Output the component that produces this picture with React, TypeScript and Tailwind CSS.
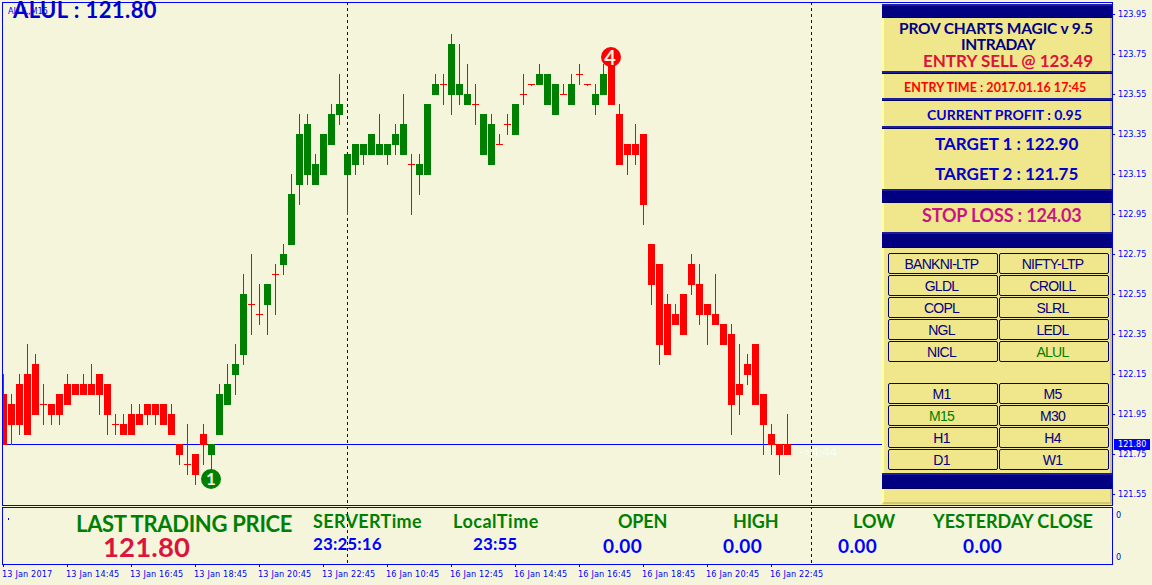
import clsx from "clsx";

// One row per bar: [high, body top, body bottom, low], in grid steps of 10px
const CANDLES: [number, number, number, number][] = [
    [37, 39, 44, 44], [39, 40, 42, 44], [37, 38, 42, 43], [34, 37, 43, 43], [35, 36, 41, 41],
    [38, 40, 40, 42], [40, 40, 41, 42], [39, 39, 41, 42], [37, 38, 40, 40], [38, 38, 39, 39],
    [37, 38, 39, 39], [36, 38, 39, 39], [37, 37, 39, 41], [38, 38, 41, 43], [41, 42, 42, 43],
    [41, 42, 43, 43], [40, 41, 43, 43], [40, 41, 42, 42], [40, 40, 41, 42], [40, 40, 41, 42],
    [40, 40, 42, 42], [40, 41, 43, 43], [44, 44, 45, 46], [42, 46, 46, 47], [45, 45, 47, 48],
    [42, 43, 44, 46], [44, 44, 45, 47], [38, 39, 43, 43], [36, 38, 40, 40], [34, 36, 37, 39],
    [27, 29, 35, 36], [25, 30, 30, 33], [28, 31, 31, 32], [28, 28, 30, 33], [26, 27, 27, 31],
    [24, 25, 26, 27], [17, 19, 24, 24], [11, 13, 18, 20], [11, 12, 17, 18], [15, 16, 18, 18],
    [13, 13, 17, 17], [10, 11, 14, 14], [7, 10, 11, 12], [15, 15, 17, 21], [14, 14, 16, 17],
    [14, 14, 15, 16], [13, 13, 15, 15], [11, 14, 15, 15], [14, 14, 15, 16], [12, 13, 14, 15],
    [9, 12, 15, 15], [15, 16, 16, 21], [15, 16, 17, 19], [10, 10, 17, 17], [7, 8, 9, 9],
    [7, 8, 8, 10], [3, 4, 9, 11], [4, 8, 9, 10], [6, 9, 10, 10], [8, 10, 10, 12],
    [11, 11, 15, 15], [11, 12, 16, 16], [13, 14, 14, 14], [11, 12, 12, 13], [10, 10, 13, 13],
    [7, 9, 9, 10], [8, 8, 8, 8], [6, 7, 8, 8], [7, 7, 10, 10], [8, 8, 11, 11],
    [8, 9, 9, 9], [7, 8, 10, 10], [6, 7, 7, 8], [8, 8, 8, 8], [8, 9, 10, 11],
    [6, 7, 9, 9], [6, 6, 10, 10], [10, 11, 16, 16], [14, 14, 15, 17], [12, 14, 15, 16],
    [13, 13, 20, 22], [24, 24, 28, 30], [26, 26, 34, 36], [29, 30, 35, 35], [30, 31, 32, 32],
    [29, 29, 33, 33], [25, 26, 28, 29], [26, 28, 31, 32], [30, 30, 31, 34], [27, 31, 32, 32],
    [32, 32, 34, 34], [32, 33, 40, 43], [34, 38, 39, 41], [35, 36, 37, 38], [34, 34, 40, 40],
    [39, 39, 42, 45], [42, 43, 44, 45], [44, 44, 45, 47], [41, 44, 45, 45],
];

const FIRST_BUY = 26;
const FIRST_SELL = 76;

const PRICES = [
    "123.95", "123.75", "123.55", "123.35", "123.15", "122.95", "122.75",
    "122.55", "122.35", "122.15", "121.95", "121.75", "121.55",
];

const DATES = [
    "13 Jan 2017", "13 Jan 14:45", "13 Jan 16:45", "13 Jan 18:45", "13 Jan 20:45", "13 Jan 22:45", "16 Jan 10:45",
    "16 Jan 12:45", "16 Jan 14:45", "16 Jan 16:45", "16 Jan 18:45", "16 Jan 20:45", "16 Jan 22:45",
];

const SYMBOLS = ["BANKNI-LTP", "NIFTY-LTP", "GLDL", "CROILL", "COPL", "SLRL", "NGL", "LEDL", "NICL", "ALUL"];
const PERIODS = ["M1", "M5", "M15", "M30", "H1", "H4", "D1", "W1"];

function Candle({ index }: { index: number }) {
    const [high, top, bottom, low] = CANDLES[index];
    const x = 3 + index * 8;
    const color = index >= FIRST_BUY && index < FIRST_SELL ? "#008000" : "#ff0000";
    const doji = top === bottom;
    const flat = high === low;
    return (
        <g>
            <rect x={x} y={high * 10 + 4} width={1} height={flat ? 2 : (low - high) * 10 + 1} fill={flat ? "#ff0000" : color} />
            <rect x={x - 3} y={top * 10 + 4} width={7} height={(bottom - top) * 10 + 1} fill={doji ? "#ff0000" : color} />
        </g>
    );
}

function Chart() {
    return (
        <svg className="block" width={879} height={502} viewBox="3 3 879 502" shapeRendering="crispEdges">
            <path d="M347.5 2V505M811.5 2V505" stroke="#0000b4" strokeDasharray="3 3" />
            <rect x={3} y={444} width={879} height={1} fill="#0000ff" />
            {CANDLES.map((_, i) => (
                <Candle key={i} index={i} />
            ))}
            <g shapeRendering="auto">
                <circle cx={211} cy={479} r={10} fill="#008000" />
                <circle cx={611} cy={57} r={10} fill="#ff0000" />
            </g>
        </svg>
    );
}

function Bar({ className }: { className: string }) {
    return <div className={clsx("shrink-0 border-t-2 border-b border-t-[#1c1c9c] border-b-[#00005c] bg-[#000080]", className)} />;
}

function Section({ className, children }: { className: string; children?: React.ReactNode }) {
    return (
        <div className={clsx("flex shrink-0 flex-col border-r-2 border-l-2 border-r-[#d0c674] border-l-[#ffffa4] whitespace-nowrap", className)}>
            {children}
        </div>
    );
}

function Buttons({ items, active, className }: { items: string[]; active: string; className?: string }) {
    return (
        <div className={clsx("ml-1 grid w-[221px] grid-cols-2 gap-px", className)}>
            {items.map((item) => (
                <button
                    key={item}
                    className={clsx(
                        "h-[21px] rounded-[2px] border border-[#000080] pt-px pr-[3px] text-center font-['Liberation_Sans',sans-serif] text-[14px] leading-[19px] tracking-[-0.75px]",
                        item === active ? "text-[#008000]" : "text-[#000080]"
                    )}
                >
                    {item}
                </button>
            ))}
        </div>
    );
}

function SignalPanel() {
    return (
        <aside className="flex w-[230px] flex-col bg-[#f0e68c] font-bold">
            <div className="h-px bg-[#f5f5dc]" />
            <Bar className="h-[14px]" />
            <Section className="h-[53px] pt-[2px]">
                <p className="h-4 pl-[15px] text-[15.5px] leading-4 tracking-[-0.16px] text-[#000080]">PROV CHARTS MAGIC v 9.5</p>
                <p className="h-4 pl-[77px] text-[15.5px] leading-4 tracking-[-0.4px] text-[#000080]">INTRADAY</p>
                <p className="h-[17px] pl-[39px] text-[17px] leading-[17px] text-[#dc143c]">ENTRY SELL @ 123.49</p>
            </Section>
            <Bar className="h-[3px]" />
            <Section className="h-6 pt-[3px]">
                <p className="pl-[20px] text-[12.5px] leading-[21px] tracking-[0.05px] text-[#ff0000]">ENTRY TIME : 2017.01.16 17:45</p>
            </Section>
            <Bar className="h-[3px]" />
            <Section className="h-[25px] pt-[3px]">
                <p className="pl-[43px] text-[14px] leading-[22px] text-[#0000cd]">CURRENT PROFIT : 0.95</p>
            </Section>
            <Bar className="h-[3px]" />
            <Section className="h-[60px] text-[17px] leading-[30px] text-[#0000cd]">
                <p className="pl-[51px]">TARGET 1 : 122.90</p>
                <p className="pl-[51px]">TARGET 2 : 121.75</p>
            </Section>
            <Bar className="h-[14px]" />
            <Section className="h-[29px]">
                <p className="pl-[38px] text-[18px] leading-[25px] tracking-[-0.18px] text-[#c71585]">STOP LOSS : 124.03</p>
            </Section>
            <Bar className="h-4" />
            <Section className="h-[225px] pt-[5px] font-normal">
                <Buttons items={SYMBOLS} active="ALUL" />
                <Buttons items={PERIODS} active="M15" className="mt-[21px]" />
            </Section>
            <Bar className="h-4" />
            <Section className="h-[15px] border-b-2 border-b-[#d0c674]" />
        </aside>
    );
}

function PriceAxis() {
    return (
        <div className="relative w-[39px] pt-[4px] text-[9px] text-[#0000ff]">
            {PRICES.map((price) => (
                <div key={price} className="mb-[19px] flex h-[21px] items-center">
                    <span className="h-px w-[2px] bg-[#0000ff]" />
                    <span className="ml-[3px]">{price}</span>
                </div>
            ))}
            <span className="absolute top-[439px] left-[1px] h-[11px] w-9 bg-[#0000ff] pl-1 leading-[11px] text-white">121.80</span>
        </div>
    );
}

function Stat({ className, label, value, valueClass }: { className: string; label: string; value: string; valueClass: string }) {
    return (
        <div className={clsx("shrink-0 pt-1 text-[18px] leading-[19px]", className)}>
            <p className="text-[#008000]">{label}</p>
            <p className={clsx("text-[#0000ff]", valueClass)}>{value}</p>
        </div>
    );
}

function Footer() {
    return (
        <footer className="relative ml-[2px] mt-px flex h-[58px] w-[1111px] border border-[#0000ff] font-['Lato',sans-serif] font-bold whitespace-nowrap">
            <span className="mt-[10px] ml-[5px] h-[2px] w-px bg-[#0000ff]" />
            <div className="ml-[67px] w-[234px] shrink-0 pt-[5px]">
                <p className="text-[22px] leading-[22px] tracking-[-0.3px] text-[#008000]">LAST TRADING PRICE</p>
                <p className="pl-[27px] text-[27.5px] leading-[24px] tracking-[0.15px] text-[#dc143c]">121.80</p>
            </div>
            <Stat className="w-[141px] pl-[3px] tracking-[0.35px]" label="SERVERTime" value="23:25:16" valueClass="pt-[3px] text-[17px] tracking-[0.1px]" />
            <Stat className="w-[149px] pl-[2px] tracking-[0.5px]" label="LocalTime" value="23:55" valueClass="pt-[3px] pl-5 text-[17px] tracking-[0.1px]" />
            <Stat className="w-[120px] pl-[18px] tracking-[-0.2px]" label="OPEN" value="0.00" valueClass="-ml-[15px] pt-[5px] text-[19px] tracking-[0.4px]" />
            <Stat className="w-[115px] pl-[13px] tracking-[-0.2px]" label="HIGH" value="0.00" valueClass="-ml-[10px] pt-[5px] text-[19px] tracking-[0.4px]" />
            <Stat className="w-[94px] pl-[18px]" label="LOW" value="0.00" valueClass="-ml-[15px] pt-[5px] text-[19px] tracking-[0.4px]" />
            <Stat className="w-[170px] pl-[4px]" label="YESTERDAY CLOSE" value="0.00" valueClass="pl-[30px] pt-[5px] text-[19px] tracking-[0.4px]" />
            {/* the session separators run on through this window */}
            <svg className="absolute inset-0" width={1109} height={56} viewBox="3 508 1109 56" shapeRendering="crispEdges">
                <path d="M347.5 506V564M811.5 506V564" stroke="#0000b4" strokeDasharray="3 3" />
            </svg>
        </footer>
    );
}

export default function App() {
    return (
        <div className="h-[585px] w-[1152px] overflow-hidden bg-[#f5f5dc] font-['DejaVu_Sans_Condensed','DejaVu_Sans',sans-serif]">
            <div className="flex h-[506px]">
                <main className="mt-[2px] ml-[2px] flex h-[504px] w-[1111px] border border-[#0000ff] font-['Lato',sans-serif]">
                    <div className="relative w-[879px] font-bold whitespace-nowrap">
                        <Chart />
                        <span className="absolute top-[3px] left-[5px] font-['DejaVu_Sans_Condensed','DejaVu_Sans',sans-serif] text-[9px] leading-[10px] font-normal text-[#0000ff]">
                            ALUL,M15
                        </span>
                        <h1 className="absolute -top-[4px] left-[10px] text-[22px] leading-[22px] tracking-[0.4px] text-[#0000cd]">ALUL : 121.80</h1>
                        <span className="absolute top-[466px] left-[198px] w-5 text-center text-[17px] leading-5 text-[#f5f5dc]">1</span>
                        <span className="absolute top-[44px] left-[597px] w-5 text-center text-[20px] leading-5 text-[#f5f5dc]">4</span>
                        <span className="absolute top-[442px] left-[796px] text-[13px] leading-[14px] text-[#f0fff0]">-&gt;4:44</span>
                    </div>
                    <SignalPanel />
                </main>
                <PriceAxis />
            </div>
            <div className="flex">
                <Footer />
                <div className="flex w-[39px] flex-col justify-between pt-[2px] pb-[2px] pl-[3px] text-[9px] leading-[12px] text-[#0000ff]">
                    <span className="pt-px">0</span>
                    <span>0</span>
                </div>
            </div>
            <div className="flex pl-[2px] text-[9px] leading-[15px] tracking-[0.17px] text-[#0000ff]">
                {DATES.map((date) => (
                    <div key={date} className="w-16 shrink-0 whitespace-nowrap">
                        <div className="ml-px h-[2px] w-px bg-[#0000ff]" />
                        {date}
                    </div>
                ))}
            </div>
        </div>
    );
}
